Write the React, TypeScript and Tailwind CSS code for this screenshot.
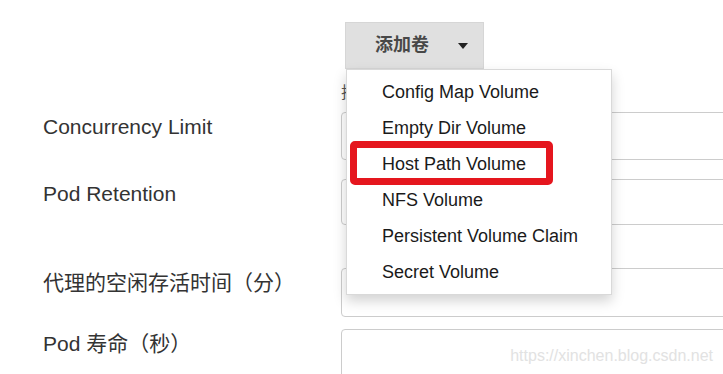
import React from "react";

const volumeTypes = [
  "Config Map Volume",
  "Empty Dir Volume",
  "Host Path Volume",
  "NFS Volume",
  "Persistent Volume Claim",
  "Secret Volume",
];

type RowProps = {
  label: string;
  top: string;
  height: string;
};

function FieldRow({ label, top, height }: RowProps) {
  return (
    <div className={`flex items-start ${top}`}>
      <label className="w-[298px] shrink-0 text-[21px] leading-[30px] text-[#333]">
        {label}
      </label>
      <div className="flex-1">
        <input
          className={`block w-[calc(100%+20px)] ${height} rounded-[4px] border border-[#cccccc] bg-white`}
        />
      </div>
    </div>
  );
}

export default function App() {
  return (
    <div
      className="relative h-[374px] w-full overflow-hidden bg-white pl-[43px] pt-[22px]"
      style={{ fontFamily: '"Liberation Sans", "Noto Sans CJK SC", sans-serif' }}
    >
      <div className="flex">
        <div className="w-[298px] shrink-0" />
        <div className="flex-1">
          <div className="relative ml-[4px] w-[139px]">
            <button className="flex h-[47px] w-[139px] items-center border border-[#d6d6d6] bg-[#e0e0e0] pl-[29px] pr-[15px] text-[18px] font-bold text-[#484848]">
              <span>添加卷</span>
              <span className="ml-auto h-0 w-0 border-x-[5px] border-t-[6px] border-x-transparent border-t-[#222]" />
            </button>
            <ul className="absolute left-[1px] top-full z-10 w-[266px] border border-[#d9d9d9] bg-white py-[4px] shadow-[0_6px_12px_rgba(0,0,0,0.175)]">
              {volumeTypes.map((v) => (
                <li
                  key={v}
                  className="h-[36px] pl-[35px] text-[18px] leading-[36px] text-[#1a1a1a]"
                >
                  {v}
                </li>
              ))}
              <div className="absolute left-[3px] top-[71px] h-[44px] w-[203px] rounded-[5px] border-[7px] border-[#e5161e]" />
            </ul>
          </div>
          <p className="mt-[12px] text-[16px] leading-[24px] text-[#555]">
            挂载卷到代理容器
          </p>
        </div>
      </div>

      <FieldRow label="Concurrency Limit" top="mt-[7px]" height="h-[48px]" />
      <FieldRow label="Pod Retention" top="mt-[19px]" height="h-[46px]" />
      <FieldRow label="代理的空闲存活时间（分）" top="mt-[43px]" height="h-[49px]" />
      <FieldRow label="Pod 寿命（秒）" top="mt-[12px]" height="h-[60px]" />

      <div className="absolute bottom-[8px] right-[10px] text-[16px] leading-[20px] text-[#e2e2e2]">
        https://xinchen.blog.csdn.net
      </div>
    </div>
  );
}
